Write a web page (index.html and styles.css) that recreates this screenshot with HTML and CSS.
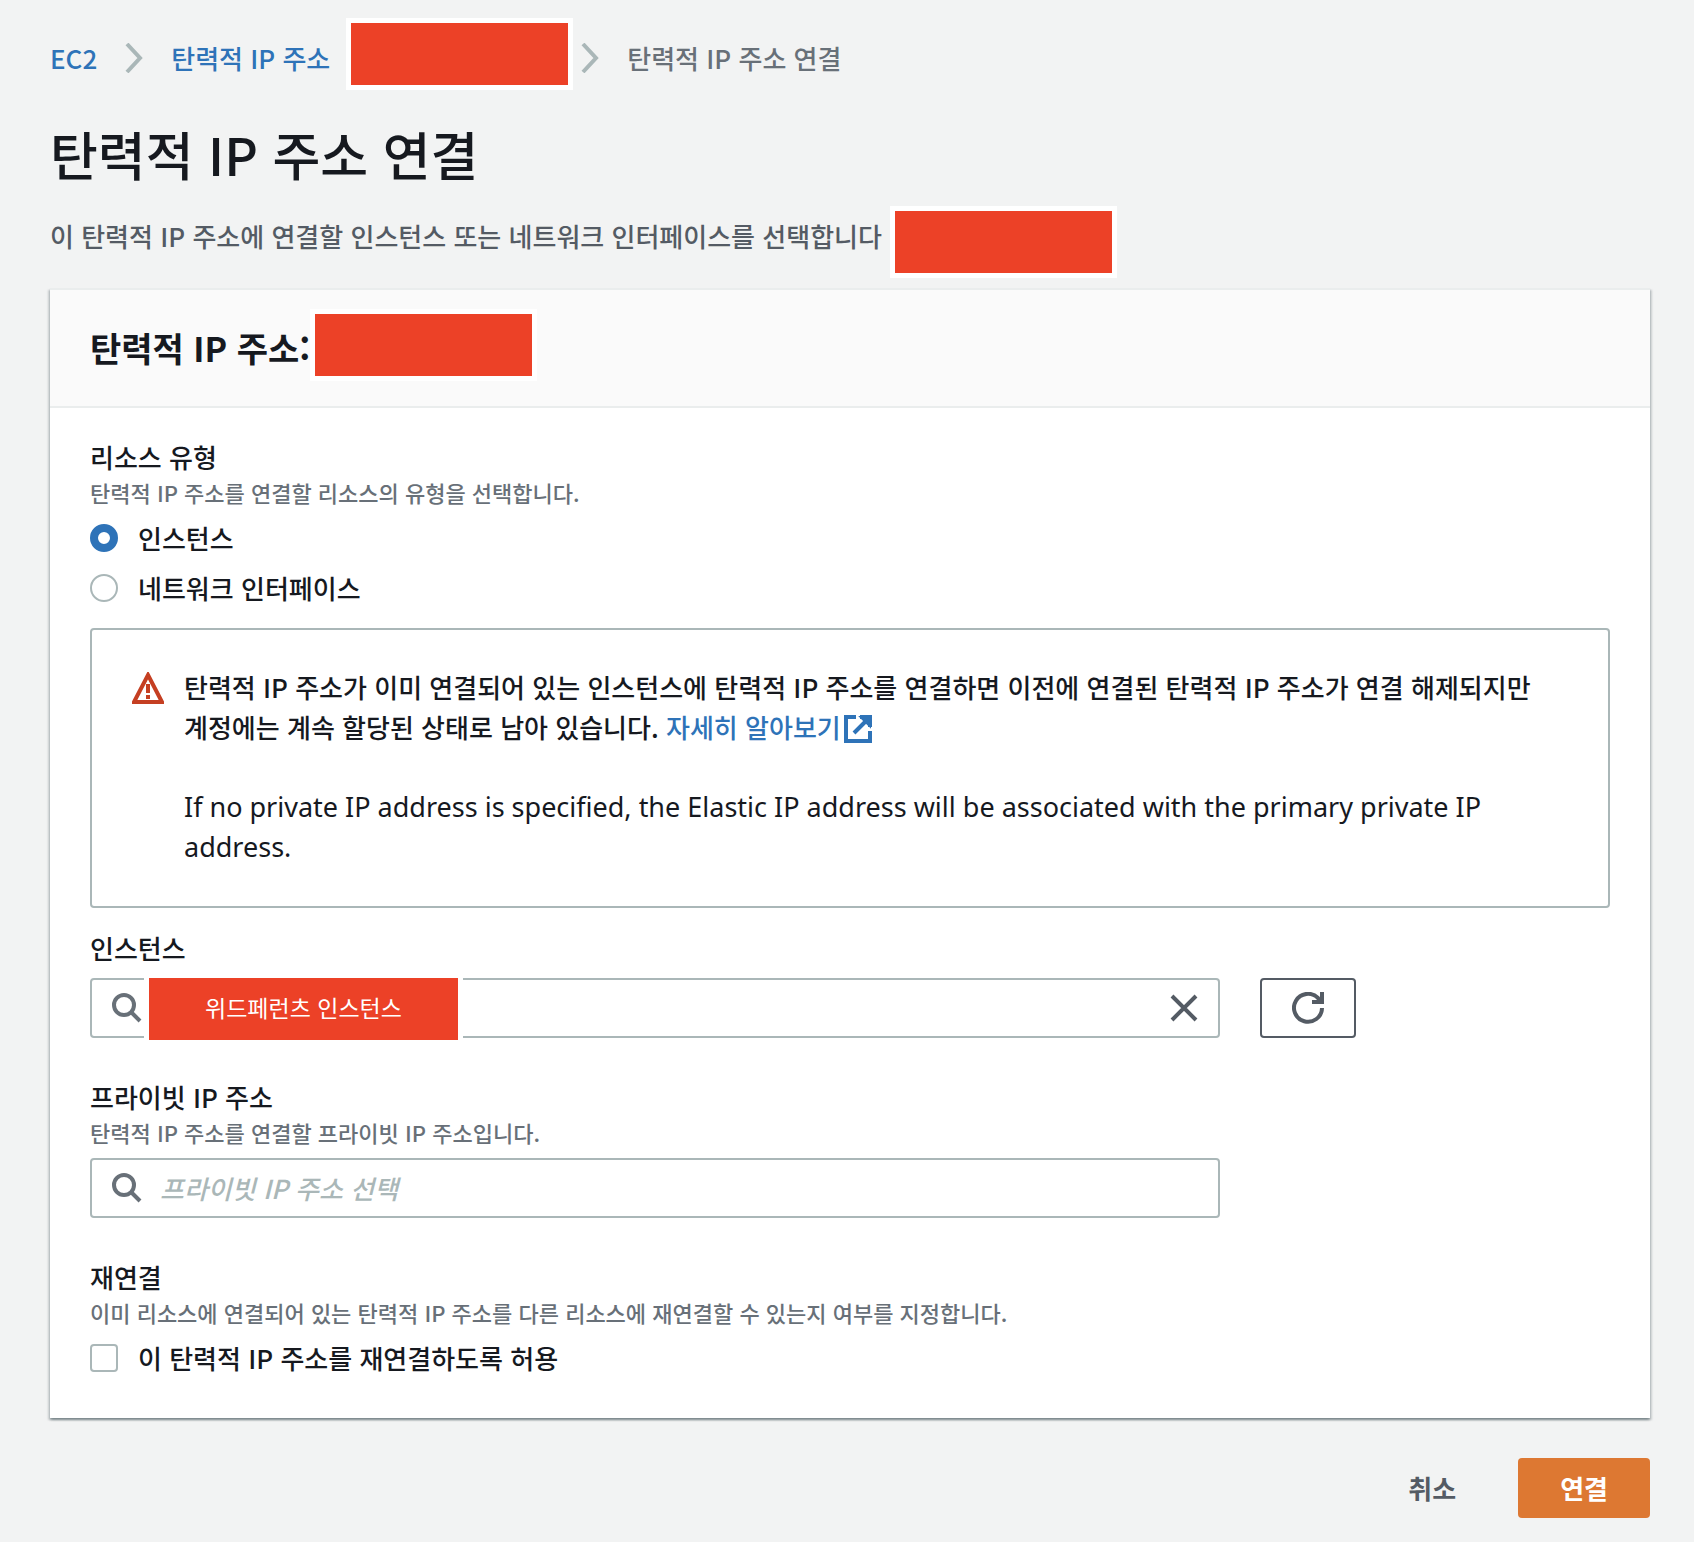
FILE: index.html
```html
<!DOCTYPE html>
<html lang="ko">
<head>
    <meta charset="UTF-8">
    <meta name="viewport" content="width=device-width, initial-scale=1.0">
    <title>탄력적 IP 주소 연결 | EC2</title>
    <link rel="stylesheet" href="styles.css">
</head>
<body>
    <nav class="breadcrumb" aria-label="breadcrumb">
        <a href="#">EC2</a>
        <svg class="chevron" viewBox="0 0 18 30" aria-hidden="true"><path d="M2 1 L15 15 L2 29"/></svg>
        <a href="#">탄력적 IP 주소</a>
        <span class="redacted"></span>
        <svg class="chevron chevron-last" viewBox="0 0 18 30" aria-hidden="true"><path d="M2 1 L15 15 L2 29"/></svg>
        <span class="current">탄력적 IP 주소 연결</span>
    </nav>

    <h1>탄력적 IP 주소 연결</h1>
    <div class="intro">
        <p>이 탄력적 IP 주소에 연결할 인스턴스 또는 네트워크 인터페이스를 선택합니다</p>
        <span class="redacted"></span>
    </div>

    <form>
        <section class="card">
            <header class="card-header">
                <h2>탄력적 IP 주소:</h2>
                <span class="redacted"></span>
            </header>

            <div class="card-body">
                <div class="group" role="radiogroup" aria-labelledby="resource-type">
                    <div class="label" id="resource-type">리소스 유형</div>
                    <p class="hint">탄력적 IP 주소를 연결할 리소스의 유형을 선택합니다.</p>
                    <label class="choice"><input type="radio" name="resource" checked>인스턴스</label>
                    <label class="choice"><input type="radio" name="resource">네트워크 인터페이스</label>
                </div>

                <div class="alert">
                    <svg class="warning" viewBox="0 0 32 32" aria-hidden="true">
                        <path d="M16 3 L30 30 H2 Z"/>
                        <path d="M16 12 V21 M16 23 V27"/>
                    </svg>
                    <div class="alert-text">
                        <p>탄력적 IP 주소가 이미 연결되어 있는 인스턴스에 탄력적 IP 주소를 연결하면 이전에 연결된 탄력적 IP 주소가 연결 해제되지만 계정에는 계속 할당된 상태로 남아 있습니다. <a href="#">자세히 알아보기<svg class="external" viewBox="0 0 28 28" aria-hidden="true"><path d="M12 2 H2 V26 H26 V16 M16 2 H26 V12 M26 2 L10 18"/><path d="M19 3 L25 9 V3 Z"/></svg></a></p>
                        <p class="latin">If no private IP address is specified, the Elastic IP address will be associated with the primary private IP address.</p>
                    </div>
                </div>

                <div class="group">
                    <label class="label" for="instance">인스턴스</label>
                    <div class="row">
                        <div class="field">
                            <svg class="search" viewBox="0 0 30 30" aria-hidden="true"><circle cx="12" cy="12" r="10"/><path d="M19 19 L28 28"/></svg>
                            <input type="text" id="instance">
                            <button type="button" class="clear" aria-label="지우기">
                                <svg viewBox="0 0 28 28" aria-hidden="true"><path d="M2 2 L26 26 M26 2 L2 26"/></svg>
                            </button>
                            <span class="redacted redacted-value">위드페런츠 인스턴스</span>
                        </div>
                        <button type="button" class="refresh" aria-label="새로 고침">
                            <svg viewBox="0 0 32 32" aria-hidden="true"><path d="M30 16 A14 14 0 1 1 26 6 L29 10"/><path d="M20 10 H30 V0"/></svg>
                        </button>
                    </div>
                </div>

                <div class="group">
                    <label class="label" for="private-ip">프라이빗 IP 주소</label>
                    <p class="hint">탄력적 IP 주소를 연결할 프라이빗 IP 주소입니다.</p>
                    <div class="row">
                        <div class="field">
                            <svg class="search" viewBox="0 0 30 30" aria-hidden="true"><circle cx="12" cy="12" r="10"/><path d="M19 19 L28 28"/></svg>
                            <input type="text" id="private-ip" placeholder="프라이빗 IP 주소 선택">
                        </div>
                    </div>
                </div>

                <div class="group">
                    <div class="label">재연결</div>
                    <p class="hint">이미 리소스에 연결되어 있는 탄력적 IP 주소를 다른 리소스에 재연결할 수 있는지 여부를 지정합니다.</p>
                    <label class="choice"><input type="checkbox">이 탄력적 IP 주소를 재연결하도록 허용</label>
                </div>
            </div>
        </section>

        <div class="actions">
            <button type="button" class="btn">취소</button>
            <button type="submit" class="btn btn-primary">연결</button>
        </div>
    </form>
</body>
</html>
```

FILE: styles.css
```css
* {
    box-sizing: border-box;
}
body {
    margin: 0;
    padding: 18px 44px 24px 50px;
    background: #f2f3f3;
    color: #16191f;
    font-family: "Noto Sans CJK KR", "Noto Sans", sans-serif;
    font-size: 26px;
    font-weight: 500;
    line-height: 40px;
    word-break: keep-all;
}
h1, h2, p {
    margin: 0;
}
a {
    color: #2e73b8;
    text-decoration: none;
}
button, input {
    font: inherit;
    color: inherit;
}
svg {
    fill: none;
    stroke: currentColor;
    stroke-width: 4px;
    flex: none;
}

/* masked values */
.redacted {
    flex: none;
    width: 227px;
    height: 72px;
    border: 5px solid #fff;
    background: #ec4127;
}

.breadcrumb {
    display: flex;
    align-items: center;
    height: 80px;
}
.breadcrumb .redacted {
    align-self: flex-start;
    margin-left: 16px;
}
.chevron {
    width: 18px;
    height: 30px;
    margin: 0 28px;
    color: #aab7b8;
}
.chevron-last {
    margin-left: 8px;
}
.current {
    color: #687078;
}

h1 {
    margin: 16px 0 4px;
    font-size: 52px;
    font-weight: 500;
    line-height: 80px;
}
.intro {
    display: flex;
    height: 90px;
    padding-top: 8px;
    color: #545b64;
}
.intro p {
    padding-top: 10px;
    padding-right: 8px;
}

.card {
    background: #fff;
    border-top: 2px solid #eaeded;
    box-shadow: 0 2px 2px rgba(0, 28, 36, 0.3), 2px 2px 2px rgba(0, 28, 36, 0.15), -2px 2px 2px rgba(0, 28, 36, 0.15);
}
.card-header {
    display: flex;
    align-items: center;
    height: 118px;
    padding: 0 40px;
    background: #fafafa;
    border-bottom: 2px solid #eaeded;
}
.card-header .redacted {
    margin-bottom: 6px;
}
h2 {
    font-size: 34px;
    font-weight: 700;
}
.card-body {
    padding: 29px 40px 40px;
}
.group + .group {
    margin-top: 39px;
}
.label {
    display: block;
}
.hint {
    color: #687078;
    font-size: 22px;
    line-height: 31px;
}
.choice {
    display: flex;
    align-items: center;
    gap: 20px;
    margin-top: 10px;
}
.choice input {
    appearance: none;
    width: 28px;
    height: 28px;
    margin: 0;
    background: #fff;
    border: 2px solid #aab7b8;
    border-radius: 4px;
}
.choice input[type="radio"] {
    border-radius: 50%;
}
.choice input[type="radio"]:checked {
    border: 8px solid #2e73b8;
}

.alert {
    display: flex;
    gap: 20px;
    margin: 20px 0;
    padding: 37px 40px 39px;
    border: 2px solid #aab7b8;
    border-radius: 4px;
}
.warning {
    width: 32px;
    height: 32px;
    margin-top: 5px;
    color: #c53f22;
}
.external {
    width: 28px;
    height: 28px;
    margin-left: 3px;
    vertical-align: -5px;
}
.latin {
    margin-top: 40px;
    font-family: "Noto Sans", sans-serif;
    font-size: 27px;
    font-weight: 400;
}

.row {
    display: grid;
    grid-template-columns: repeat(12, 1fr);
    column-gap: 40px;
    margin-top: 10px;
}
.field {
    position: relative;
    grid-column: span 9;
    display: flex;
    align-items: center;
    height: 60px;
    padding: 0 20px;
    border: 2px solid #aab7b8;
    border-radius: 4px;
}
.field input {
    flex: 1;
    min-width: 0;
    padding: 0 18px;
    border: 0;
    outline: 0;
    background: none;
}
.field input::placeholder {
    color: #aab7b8;
    font-style: italic;
    opacity: 1;
}
.search {
    width: 30px;
    height: 30px;
    color: #687078;
}
.clear {
    display: flex;
    padding: 0;
    border: 0;
    background: none;
    color: #545b64;
}
.clear svg {
    width: 28px;
    height: 28px;
}
.redacted-value {
    position: absolute;
    top: -7px;
    left: 52px;
    width: 319px;
    color: #fff;
    font-size: 23px;
    font-weight: 400;
    line-height: 58px;
    text-align: center;
}
.refresh {
    grid-column: span 3;
    justify-self: start;
    display: flex;
    align-items: center;
    justify-content: center;
    width: 96px;
    padding: 0;
    border: 2px solid #545b64;
    border-radius: 4px;
    background: #fff;
    color: #545b64;
}
.refresh svg {
    width: 32px;
    height: 32px;
}

.actions {
    display: flex;
    justify-content: flex-end;
    gap: 20px;
    margin-top: 40px;
}
.btn {
    height: 60px;
    padding: 0 42px;
    border: 0;
    border-radius: 4px;
    background: none;
    color: #545b64;
    font-weight: 700;
}
.btn-primary {
    background: #dd7832;
    color: #fff;
}
```
